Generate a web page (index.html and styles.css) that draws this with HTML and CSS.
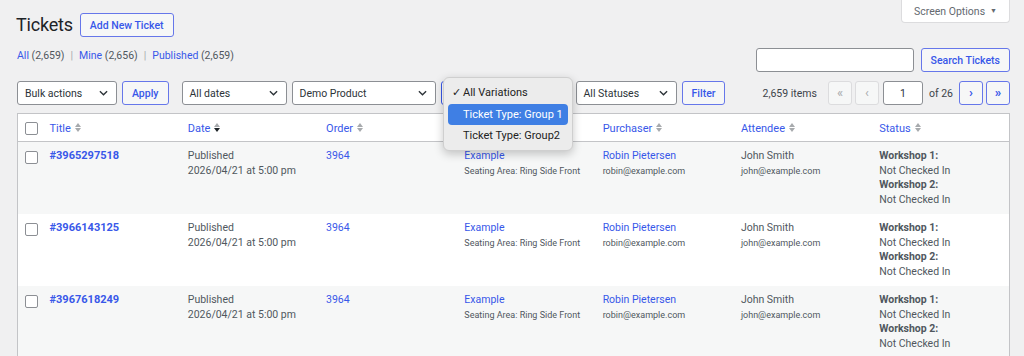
FILE: index.html
```html
<!DOCTYPE html>
<html>
<head>
<meta charset="utf-8">
<link rel="stylesheet" href="styles.css">
</head>
<body>
<div class="wrap">
  <div class="top">
    <div class="heading">
      <h1 class="title">Tickets</h1>
      <a class="btn">Add New Ticket</a>
    </div>
    <div class="screen-options">Screen Options <span class="caret">▼</span></div>
  </div>
  <div class="sub-row">
    <ul class="subsub">
      <li><a>All</a> <span class="count">(2,659)</span></li>
      <li class="sep">|</li>
      <li><a>Mine</a> <span class="count">(2,656)</span></li>
      <li class="sep">|</li>
      <li><a>Published</a> <span class="count">(2,659)</span></li>
    </ul>
    <div class="search">
      <div class="input search-input"></div>
      <a class="btn">Search Tickets</a>
    </div>
  </div>
  <div class="tablenav">
    <div class="filters">
      <div class="select w-bulk"><span>Bulk actions</span><svg class="chev" viewBox="0 0 10 6"><path d="M1 1l4 4 4-4" /></svg></div>
      <a class="btn small">Apply</a>
      <div class="select w-dates gap-l"><span>All dates</span><svg class="chev" viewBox="0 0 10 6"><path d="M1 1l4 4 4-4" /></svg></div>
      <div class="select w-product"><span>Demo Product</span><svg class="chev" viewBox="0 0 10 6"><path d="M1 1l4 4 4-4" /></svg></div>
      <div class="select w-var open"></div>
      <div class="select w-status"><span>All Statuses</span><svg class="chev" viewBox="0 0 10 6"><path d="M1 1l4 4 4-4" /></svg></div>
      <a class="btn small">Filter</a>
    </div>
    <div class="pagination">
      <span class="items">2,659 items</span>
      <span class="pbtn disabled">«</span>
      <span class="pbtn disabled">‹</span>
      <span class="input page-input">1</span>
      <span class="of">of 26</span>
      <span class="pbtn">›</span>
      <span class="pbtn">»</span>
    </div>
  </div>
  <table class="list">
    <colgroup>
      <col class="c-cb"><col><col><col><col><col><col><col>
    </colgroup>
    <thead>
      <tr>
        <th class="cb"><span class="check"></span></th>
        <th><a>Title</a><span class="sort"><i class="up"></i><i class="down"></i></span></th>
        <th><a>Date</a><span class="sort"><i class="up"></i><i class="down on"></i></span></th>
        <th><a>Order</a><span class="sort"><i class="up"></i><i class="down"></i></span></th>
        <th><a>Product</a><span class="sort"><i class="up"></i><i class="down"></i></span></th>
        <th><a>Purchaser</a><span class="sort"><i class="up"></i><i class="down"></i></span></th>
        <th><a>Attendee</a><span class="sort"><i class="up"></i><i class="down"></i></span></th>
        <th><a>Status</a><span class="sort"><i class="up"></i><i class="down"></i></span></th>
      </tr>
    </thead>
    <tbody>
      <tr class="alt">
        <td class="cb"><span class="check"></span></td>
        <td><a class="strong">#3965297518</a></td>
        <td><div>Published</div><div>2026/04/21 at 5:00 pm</div></td>
        <td><a>3964</a></td>
        <td><a>Example</a><div class="meta">Seating Area: Ring Side Front</div></td>
        <td><a>Robin Pietersen</a><div class="meta">robin@example.com</div></td>
        <td><div>John Smith</div><div class="meta">john@example.com</div></td>
        <td><div class="b">Workshop 1:</div><div>Not Checked In</div><div class="b">Workshop 2:</div><div>Not Checked In</div></td>
      </tr>
      <tr>
        <td class="cb"><span class="check"></span></td>
        <td><a class="strong">#3966143125</a></td>
        <td><div>Published</div><div>2026/04/21 at 5:00 pm</div></td>
        <td><a>3964</a></td>
        <td><a>Example</a><div class="meta">Seating Area: Ring Side Front</div></td>
        <td><a>Robin Pietersen</a><div class="meta">robin@example.com</div></td>
        <td><div>John Smith</div><div class="meta">john@example.com</div></td>
        <td><div class="b">Workshop 1:</div><div>Not Checked In</div><div class="b">Workshop 2:</div><div>Not Checked In</div></td>
      </tr>
      <tr class="alt">
        <td class="cb"><span class="check"></span></td>
        <td><a class="strong">#3967618249</a></td>
        <td><div>Published</div><div>2026/04/21 at 5:00 pm</div></td>
        <td><a>3964</a></td>
        <td><a>Example</a><div class="meta">Seating Area: Ring Side Front</div></td>
        <td><a>Robin Pietersen</a><div class="meta">robin@example.com</div></td>
        <td><div>John Smith</div><div class="meta">john@example.com</div></td>
        <td><div class="b">Workshop 1:</div><div>Not Checked In</div><div class="b">Workshop 2:</div><div>Not Checked In</div></td>
      </tr>
    </tbody>
  </table>

  <div class="popup">
    <div class="opt"><span class="tick">✓</span>All Variations</div>
    <div class="opt sel">Ticket Type: Group 1</div>
    <div class="opt">Ticket Type: Group2</div>
  </div>
</div>
</body>
</html>
```

FILE: styles.css
```css
* { box-sizing: border-box; }
html, body { margin: 0; padding: 0; }
body {
  background: #f0f0f1;
  font-family: Roboto, "Noto Sans", sans-serif;
  font-size: 10.5px;
  color: #3c434a;
  width: 1024px;
  height: 356px;
  overflow: hidden;
}
a { color: #3858e9; text-decoration: none; }
.wrap { position: relative; padding: 0 14px 0 17px; }

.top { display: flex; justify-content: space-between; align-items: flex-start; height: 44px; }
.heading { display: flex; align-items: center; gap: 7px; padding-top: 13px; margin-left: -1px; }
.title { margin: 0; font-size: 18px; font-weight: 400; letter-spacing: -0.2px; color: #1d2327; line-height: 24px; }
.btn {
  display: inline-flex; align-items: center; justify-content: center;
  height: 24px; padding: 0 9px;
  border: 1px solid #6677ea; border-radius: 3px;
  background: #f6f7f7; color: #3858e9;
  font-size: 10.5px; font-weight: 500; white-space: nowrap;
}
.heading .btn { padding: 0 9px; }
.screen-options {
  width: 109px; height: 23px;
  background: #fff; border: 1px solid #dcdcde; border-top: 0;
  border-radius: 0 0 4px 4px;
  display: flex; align-items: center; justify-content: center; gap: 5px;
  color: #646970; font-size: 10.5px;
}
.caret { font-size: 7px; }

.sub-row { display: flex; justify-content: space-between; align-items: flex-start; height: 37px; }
.subsub { list-style: none; margin: 0; padding: 5px 0 0; display: flex; gap: 5px; color: #50575e; }
.subsub .sep { color: #a7aaad; padding: 0 1px; }
.count { color: #50575e; }
.search { display: flex; gap: 7px; padding-top: 4px; }
.input { background: #fff; border: 1px solid #8c8f94; border-radius: 3px; height: 24px; }
.search-input { width: 158px; }

.tablenav { display: flex; justify-content: space-between; align-items: center; height: 24px; }
.filters { display: flex; align-items: center; gap: 5px; }
.select {
  display: flex; align-items: center; justify-content: space-between;
  height: 24px; padding: 0 8px 0 7px;
  background: #fff; border: 1px solid #8c8f94; border-radius: 3px;
  color: #2c3338; font-size: 10.5px;
}
.select.open { border-color: #3858e9; }
.chev { width: 9px; height: 6px; fill: none; stroke: #2c3338; stroke-width: 1.5; }
.w-bulk { width: 100px; }
.w-dates { width: 105px; }
.gap-l { margin-left: 8px; }
.w-product { width: 144px; }
.w-var { width: 130px; }
.w-status { width: 101px; }

.pagination { display: flex; align-items: center; gap: 3px; }
.items { margin-right: 8px; color: #3c434a; }
.pbtn {
  width: 24px; height: 24px; display: flex; align-items: center; justify-content: center;
  border: 1px solid #6677ea; border-radius: 3px; background: #f6f7f7; color: #3858e9;
  font-size: 13px; font-weight: 700; line-height: 1; padding-bottom: 2px;
}
.pbtn.disabled { border-color: #dcdcde; color: #a7aaad; font-weight: 400; }
.page-input { width: 40px; display: flex; align-items: center; justify-content: center; color: #2c3338; margin-left: 1px; }
.of { margin: 0 3px; }

.list {
  margin-top: 8px; width: 993px;
  border-collapse: collapse; table-layout: fixed;
  background: #fff; border: 1px solid #c3c4c7;
}
.c-cb { width: 24px; }
.list th {
  text-align: left; font-weight: 400; height: 28px; padding: 0 8px;
  border-bottom: 1px solid #c3c4c7; font-size: 11px; white-space: nowrap;
}
.list th a { vertical-align: middle; }
.sort { display: inline-flex; flex-direction: column; gap: 1px; vertical-align: middle; margin-left: 4px; }
.sort i { display: block; width: 0; height: 0; border-left: 3px solid transparent; border-right: 3px solid transparent; }
.sort .up { border-bottom: 4px solid #a7aaad; }
.sort .down { border-top: 4px solid #a7aaad; }
.sort .down.on { border-top-color: #1d2327; }
.list td { vertical-align: top; padding: 7px 8px 6px; line-height: 14.7px; color: #50575e; height: 72px; white-space: nowrap; }
.list tr.alt td { background: #f6f7f7; }
.list .cb { padding: 0 0 0 7px; }
.list td.cb { padding-top: 9px; }
.check { display: block; width: 13px; height: 13px; border: 1px solid #8c8f94; border-radius: 2px; background: #fff; }
th.cb .check { margin-top: 1px; }
.strong { font-weight: 700; font-size: 11px; }
.meta { font-size: 9px; color: #50575e; }
.b { font-weight: 700; }

.popup {
  position: absolute; z-index: 5; left: 443px; top: 77px; width: 130px; height: 74px;
  background: #ececec; border: 1px solid #cfcfcf; border-radius: 6px;
  box-shadow: 0 3px 10px rgba(0,0,0,0.22);
  padding: 4px 4px;
  font-size: 11px; color: #222; white-space: nowrap;
}
.opt { height: 21px; display: flex; align-items: center; padding-left: 15px; border-radius: 4px; position: relative; margin-bottom: 0.5px; }
.opt .tick { position: absolute; left: 4px; font-size: 11px; }
.opt.sel { background: #3f7fe4; color: #fff; }
```
